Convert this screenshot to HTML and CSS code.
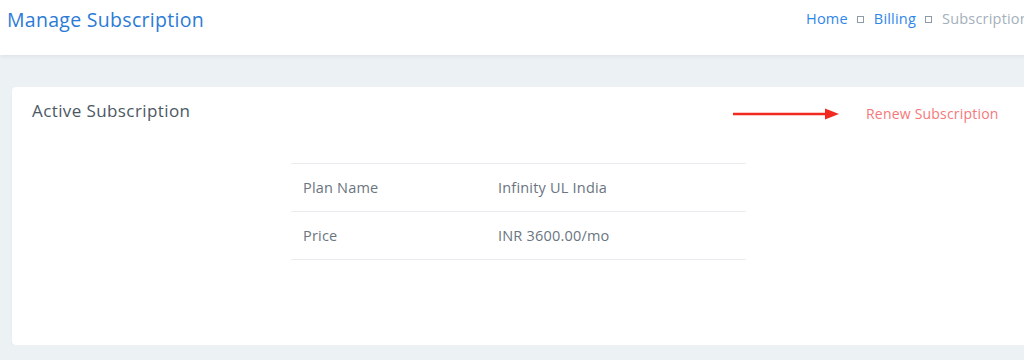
FILE: index.html
```html
<!DOCTYPE html>
<html lang="en">
  <head>
    <meta charset="UTF-8" />
    <meta name="viewport" content="width=device-width, initial-scale=1.0" />
    <title>Manage Subscription</title>
    <link rel="stylesheet" href="styles.css">
  </head>
  <body>
    <div class="page">
      <div class="page-header">
        <h1 class="page-title">Manage Subscription</h1>
        <ul class="breadcrumb">
          <li><a href="#">Home</a></li>
          <li class="sep"></li>
          <li><a href="#">Billing</a></li>
          <li class="sep"></li>
          <li class="active">Subscription</li>
        </ul>
      </div>

      <div class="content">
        <div class="card">
          <div class="card-header">
            <h4 class="card-title">Active Subscription</h4>
            <div class="card-actions">
              <svg class="arrow" width="106" height="14" viewBox="0 0 106 14">
                <line x1="0" y1="7" x2="94" y2="7" stroke="#f2291f" stroke-width="2.5" />
                <polygon points="92,1.5 106,7 92,12.5" fill="#f2291f" />
              </svg>
              <a href="#" class="renew-link">Renew Subscription</a>
            </div>
          </div>
          <div class="card-body">
            <table class="plan-table">
              <colgroup>
                <col class="label-col" />
                <col />
              </colgroup>
              <tr>
                <td>Plan Name</td>
                <td>Infinity UL India</td>
              </tr>
              <tr>
                <td>Price</td>
                <td>INR 3600.00/mo</td>
              </tr>
            </table>
          </div>
        </div>
      </div>
    </div>
  </body>
</html>
```

FILE: styles.css
```css
body {
  margin: 0;
  overflow: hidden;
  background: #ecf1f4;
  font-family: "Open Sans", "Noto Sans", Arial, sans-serif;
}
.page {
  width: 1110px;
}
.page-header {
  display: flex;
  justify-content: space-between;
  align-items: flex-start;
  height: 55px;
  padding: 0 0 0 7px;
  background: #fff;
  box-shadow: 0 1px 5px rgba(40, 60, 80, 0.09);
  position: relative;
}
.page-title {
  margin: 6px 0 0 0;
  font-size: 19.5px;
  font-weight: 400;
  color: #2b7bd6;
  letter-spacing: 0.3px;
}
.breadcrumb {
  display: flex;
  align-items: center;
  list-style: none;
  margin: 9px 0 0 0;
  padding: 0;
  font-size: 14.5px;
  letter-spacing: 0.2px;
}
.breadcrumb a {
  color: #2f86ea;
  text-decoration: none;
}
.breadcrumb .sep {
  width: 5px;
  height: 5px;
  border: 1px solid #8e9aa6;
  margin: 2px 10px 0 9px;
}
.breadcrumb .active {
  color: #a4b0bb;
  width: 168px;
}
.content {
  padding: 32px 0 0 12px;
}
.card {
  background: #fff;
  border-radius: 4px;
  height: 258px;
  box-shadow: 0 1px 3px rgba(40, 60, 80, 0.05);
}
.card-header {
  display: flex;
  justify-content: space-between;
  align-items: center;
  padding: 10px 0 0 20px;
}
.card-title {
  margin: 0;
  font-size: 17px;
  font-weight: 400;
  color: #4b5863;
  letter-spacing: 0.4px;
}
.card-actions {
  display: flex;
  align-items: center;
  margin-top: 7px;
  width: 377px;
}
.arrow {
  display: block;
  margin-right: 27px;
}
.renew-link {
  color: #f4787a;
  font-size: 14px;
  letter-spacing: 0.2px;
  text-decoration: none;
}
.card-body {
  padding: 40px 0 0 279px;
}
.plan-table {
  width: 455px;
  table-layout: fixed;
  border-collapse: collapse;
  font-size: 14.5px;
  color: #6a7580;
  letter-spacing: 0.2px;
}
.plan-table .label-col {
  width: 195px;
}
.plan-table td {
  height: 47px;
  padding: 0 12px;
  border-top: 1px solid #e9edf0;
  border-bottom: 1px solid #e9edf0;
}
```
